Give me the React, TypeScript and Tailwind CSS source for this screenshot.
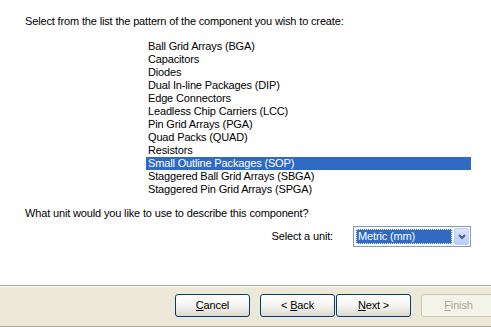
import React from "react";

const items = [
  "Ball Grid Arrays (BGA)",
  "Capacitors",
  "Diodes",
  "Dual In-line Packages (DIP)",
  "Edge Connectors",
  "Leadless Chip Carriers (LCC)",
  "Pin Grid Arrays (PGA)",
  "Quad Packs (QUAD)",
  "Resistors",
  "Small Outline Packages (SOP)",
  "Staggered Ball Grid Arrays (SBGA)",
  "Staggered Pin Grid Arrays (SPGA)",
];

function Btn({ children, disabled }: { children: React.ReactNode; disabled?: boolean }) {
  return (
    <div
      className={
        "w-[75px] h-[23px] shrink-0 rounded-[3px] border flex items-center justify-center text-[11px] leading-none " +
        (disabled
          ? "border-[#c9c7ba] bg-[#f5f4ea] text-[#aca899]"
          : "border-[#003c74] bg-gradient-to-b from-[#ffffff] via-[#f4f4f0] to-[#dcdad0] text-black")
      }
    >
      {children}
    </div>
  );
}

export default function App() {
  return (
    <div
      className="w-[491px] h-[327px] bg-white flex flex-col overflow-hidden tracking-[-0.15px]"
      style={{ fontFamily: '"Liberation Sans", Arial, sans-serif' }}
    >
      <div className="h-[285px] flex flex-col text-[11px] leading-[13px] text-black">
        <div className="pl-[25px] pt-[15px] h-[40px]">
          Select from the list the pattern of the component you wish to create:
        </div>
        <div className="ml-[146px] w-[325px] flex flex-col">
          {items.map((it) => (
            <div
              key={it}
              className={
                "h-[13px] pl-[2px] leading-[13px] whitespace-nowrap " +
                (it === "Small Outline Packages (SOP)" ? "bg-[#316ac5] text-white" : "")
              }
            >
              {it}
            </div>
          ))}
        </div>
        <div className="pl-[25px] mt-[11px] h-[13px]">
          What unit would you like to use to describe this component?
        </div>
        <div className="flex items-center mt-[6px] h-[21px]">
          <div className="w-[338px] text-right pr-[5px]">Select a unit:</div>
          <div className="ml-[15px] w-[118px] h-[21px] border border-[#7f9db9] bg-white flex items-stretch p-[1px]">
            <div className="flex-1 m-[1px] bg-[#316ac5] text-white border border-dotted border-[#ffffff] flex items-center pl-[1px] leading-none">
              Metric (mm)
            </div>
            <div className="w-[15px] ml-[1px] rounded-[2px] bg-gradient-to-b from-[#dbe6fd] to-[#b6cbf8] border border-[#bccdf5] flex items-center justify-center">
              <svg width="8" height="6" viewBox="0 0 8 6">
                <path d="M1 1 L4 4 L7 1" stroke="#4d6185" strokeWidth="2" fill="none" />
              </svg>
            </div>
          </div>
        </div>
      </div>
      <div className="h-[1px] bg-[#aca899]" />
      <div className="h-[1px] bg-white" />
      <div className="flex-1 bg-[#ece9d8] flex items-start pt-[7px] pl-[175px]">
        <Btn>
          <span><span className="underline">C</span>ancel</span>
        </Btn>
        <div className="ml-[10px]">
          <Btn>
            <span>&lt; <span className="underline">B</span>ack</span>
          </Btn>
        </div>
        <div className="ml-[1px]">
          <Btn>
            <span><span className="underline">N</span>ext &gt;</span>
          </Btn>
        </div>
        <div className="ml-[10px]">
          <Btn disabled>
            <span><span className="underline">F</span>inish</span>
          </Btn>
        </div>
      </div>
      <div className="h-[1px] bg-[#aca899]" />
    </div>
  );
}
